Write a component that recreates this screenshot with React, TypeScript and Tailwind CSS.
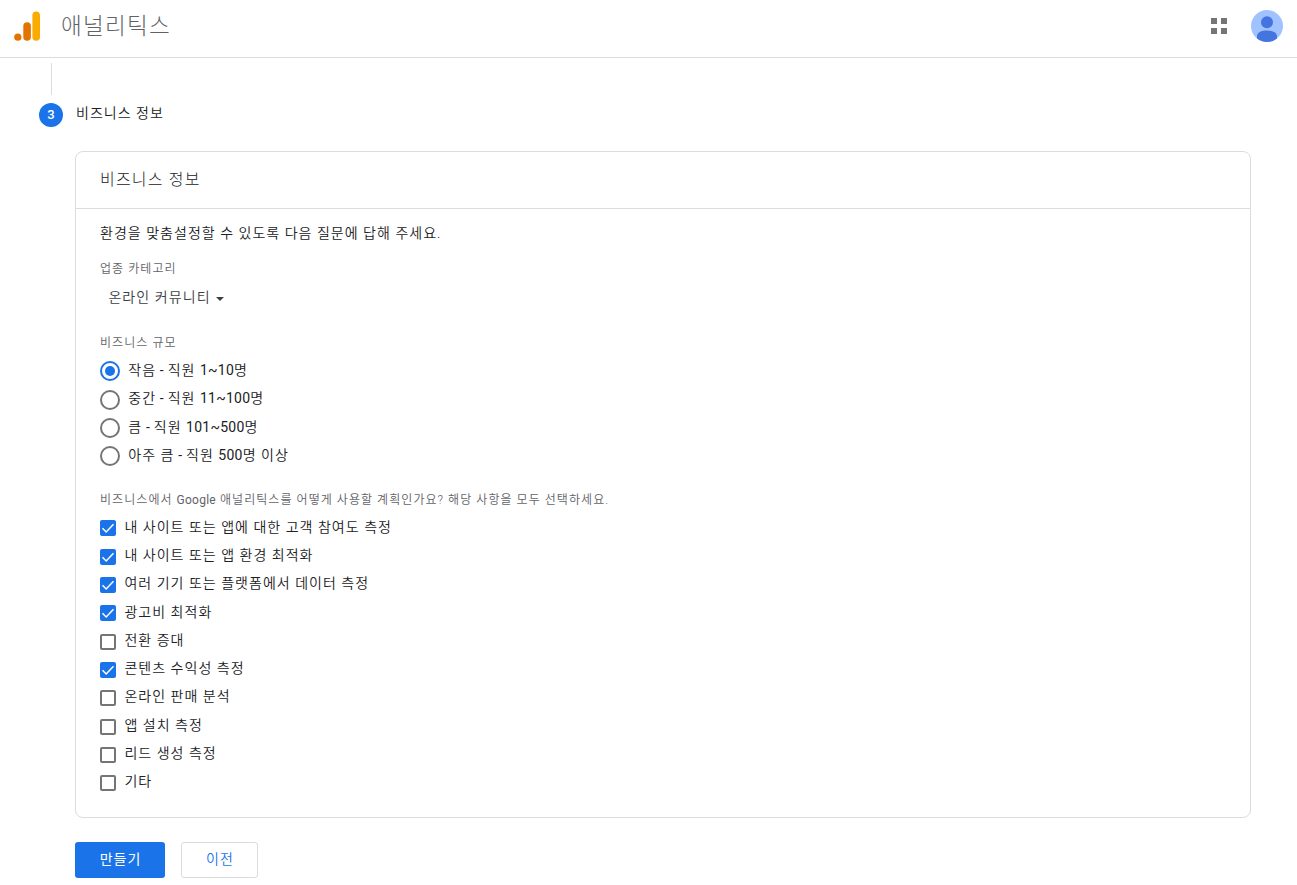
import { useState } from "react";

const sizes = ["작음 - 직원 1~10명", "중간 - 직원 11~100명", "큼 - 직원 101~500명", "아주 큼 - 직원 500명 이상"];

const goals = [
  "내 사이트 또는 앱에 대한 고객 참여도 측정",
  "내 사이트 또는 앱 환경 최적화",
  "여러 기기 또는 플랫폼에서 데이터 측정",
  "광고비 최적화",
  "전환 증대",
  "콘텐츠 수익성 측정",
  "온라인 판매 분석",
  "앱 설치 측정",
  "리드 생성 측정",
  "기타",
];

// Korean labels with latin runs inside: digits keep a tighter tracking
function Label({ text }: { text: string }) {
  return (
    <>
      {text.split(/([0-9~]+| - |Google)/).map((part, i) =>
        i % 2 ? (
          <span key={i} className="font-[380] tracking-[0.25px]">
            {part}
          </span>
        ) : (
          part
        )
      )}
    </>
  );
}

function Header() {
  return (
    <header className="flex h-[58px] items-start border-b border-[#dadce0] pl-[14px] pr-[14px]">
      <svg className="mt-[11px] shrink-0" width="27" height="30" viewBox="0 0 27 30">
        <circle cx="3.8" cy="26.2" r="3.6" fill="#e37400" />
        <rect x="9.3" y="11.3" width="7.6" height="18.5" rx="3.8" fill="#e37400" />
        <rect x="18.4" y="0.4" width="7.6" height="29.4" rx="3.8" fill="#f9ab00" />
      </svg>
      <h1 className="ml-[20px] mt-[9px] text-[22.5px] font-light leading-[34px] tracking-[1.3px] text-[#5f6368]">
        애널리틱스
      </h1>
      <svg className="ml-auto mt-[18px]" width="16" height="16" viewBox="0 0 16 16" fill="#757575">
        <path d="M0 0h6v6H0zM10 0h6v6h-6zM0 10h6v6H0zM10 10h6v6h-6z" />
      </svg>
      <svg className="ml-[24px] mt-[10px]" width="32" height="32" viewBox="0 0 32 32">
        <circle cx="16" cy="16" r="16" fill="#a0c3ff" />
        <circle cx="16" cy="12.2" r="6" fill="#4374e0" />
        <path d="M6 28.5v-2.2c0-4 4.300-5.800 10-5.800s10 1.800 10 5.800v2.200A16 16 0 0 1 16 32a16 16 0 0 1-10-3.500z" fill="#4374e0" />
      </svg>
    </header>
  );
}

export default function App() {
  const [size, setSize] = useState(0);
  const [checked, setChecked] = useState([0, 1, 2, 3, 5]);

  const toggle = (i: number) =>
    setChecked((prev) => (prev.includes(i) ? prev.filter((n) => n !== i) : [...prev, i]));

  return (
    <div className="h-[885px] overflow-hidden bg-white font-[Roboto,'Noto_Sans_CJK_KR',sans-serif] text-[14px] font-[350] tracking-[1.03px] text-[#202124]">
      <Header />

      <main className="pl-[39px] pr-[46px] pt-[5px]">
        <div className="ml-[12px] h-[32px] w-px bg-[#dadce0]" />
        <div className="mt-[8px] flex h-[24px] items-center">
          <span className="flex size-[24px] items-center justify-center rounded-full bg-[#1a73e8] text-[13px] font-medium tracking-normal text-white">
            3
          </span>
          <span className="ml-[13px] pb-[3px]">비즈니스 정보</span>
        </div>

        <section className="ml-[36px] mt-[24px] h-[667px] rounded-lg border border-[#dadce0]">
          <h2 className="h-[57px] border-b border-[#dadce0] pl-[24px] text-[16px] font-light leading-[56px] tracking-[1.2px]">
            비즈니스 정보
          </h2>
          <div className="pl-[24px]">
            <p className="mt-[14px] leading-[20px]">환경을 맞춤설정할 수 있도록 다음 질문에 답해 주세요.</p>

            <p className="mt-[18px] text-[12px] leading-[16px] tracking-[1.06px] text-[#5f6368]">업종 카테고리</p>
            <button className="mt-[10px] flex h-[20px] items-center pl-[8.4px] tracking-[1.1px] text-[#3c4043]">
              온라인 커뮤니티
              <svg className="ml-[5px] mt-[3px]" width="8" height="4" viewBox="0 0 8 4">
                <path d="M0 0h8L4 4z" fill="#3c4043" />
              </svg>
            </button>

            <p className="mt-[28px] text-[12px] leading-[16px] tracking-[1.06px] text-[#5f6368]">비즈니스 규모</p>
            <div className="mt-[6.17px]">
              {sizes.map((label, i) => (
                <label key={label} className="flex h-[28.33px] items-center">
                  <input type="radio" name="size" className="sr-only" checked={size === i} onChange={() => setSize(i)} />
                  <span
                    className={`flex size-[20px] items-center justify-center rounded-full border-2 ${
                      size === i ? "border-[#1a73e8]" : "border-[#757575]"
                    }`}
                  >
                    {size === i && <span className="size-[10px] rounded-full bg-[#1a73e8]" />}
                  </span>
                  <span className="ml-[8.3px] pb-[1.6px]">
                    <Label text={label} />
                  </span>
                </label>
              ))}
            </div>

            <p className="mt-[21.5px] text-[12px] leading-[16px] tracking-[1.06px] text-[#5f6368]">
              <Label text="비즈니스에서 Google 애널리틱스를 어떻게 사용할 계획인가요? 해당 사항을 모두 선택하세요." />
            </p>
            <div className="mt-[6.2px]">
              {goals.map((label, i) => (
                <label key={label} className="flex h-[28.33px] items-center">
                  <input type="checkbox" className="sr-only" checked={checked.includes(i)} onChange={() => toggle(i)} />
                  <span
                    className={`flex size-[16px] items-center justify-center rounded-[2px] border-2 ${
                      checked.includes(i) ? "border-[#1a73e8] bg-[#1a73e8]" : "border-[#757575]"
                    }`}
                  >
                    {checked.includes(i) && (
                      <svg className="shrink-0" width="14" height="14" viewBox="0 0 14 14" fill="none">
                        <path d="M1.500 7.300 5.200 11 12.500 3.300" stroke="#fff" strokeWidth="1.500" />
                      </svg>
                    )}
                  </span>
                  <span className="ml-[8.4px] pb-[2.6px]">{label}</span>
                </label>
              ))}
            </div>
          </div>
        </section>

        <div className="ml-[36px] mt-[24px] flex gap-[16px]">
          <button className="h-[36px] w-[90px] rounded-[3px] bg-[#1a73e8] pb-[2px] pl-[1px] font-normal text-white">
            만들기
          </button>
          <button className="h-[36px] w-[77px] rounded-[3px] border border-[#dadce0] pb-[2px] pl-[1px] text-[#1a73e8]">
            이전
          </button>
        </div>
      </main>
    </div>
  );
}
